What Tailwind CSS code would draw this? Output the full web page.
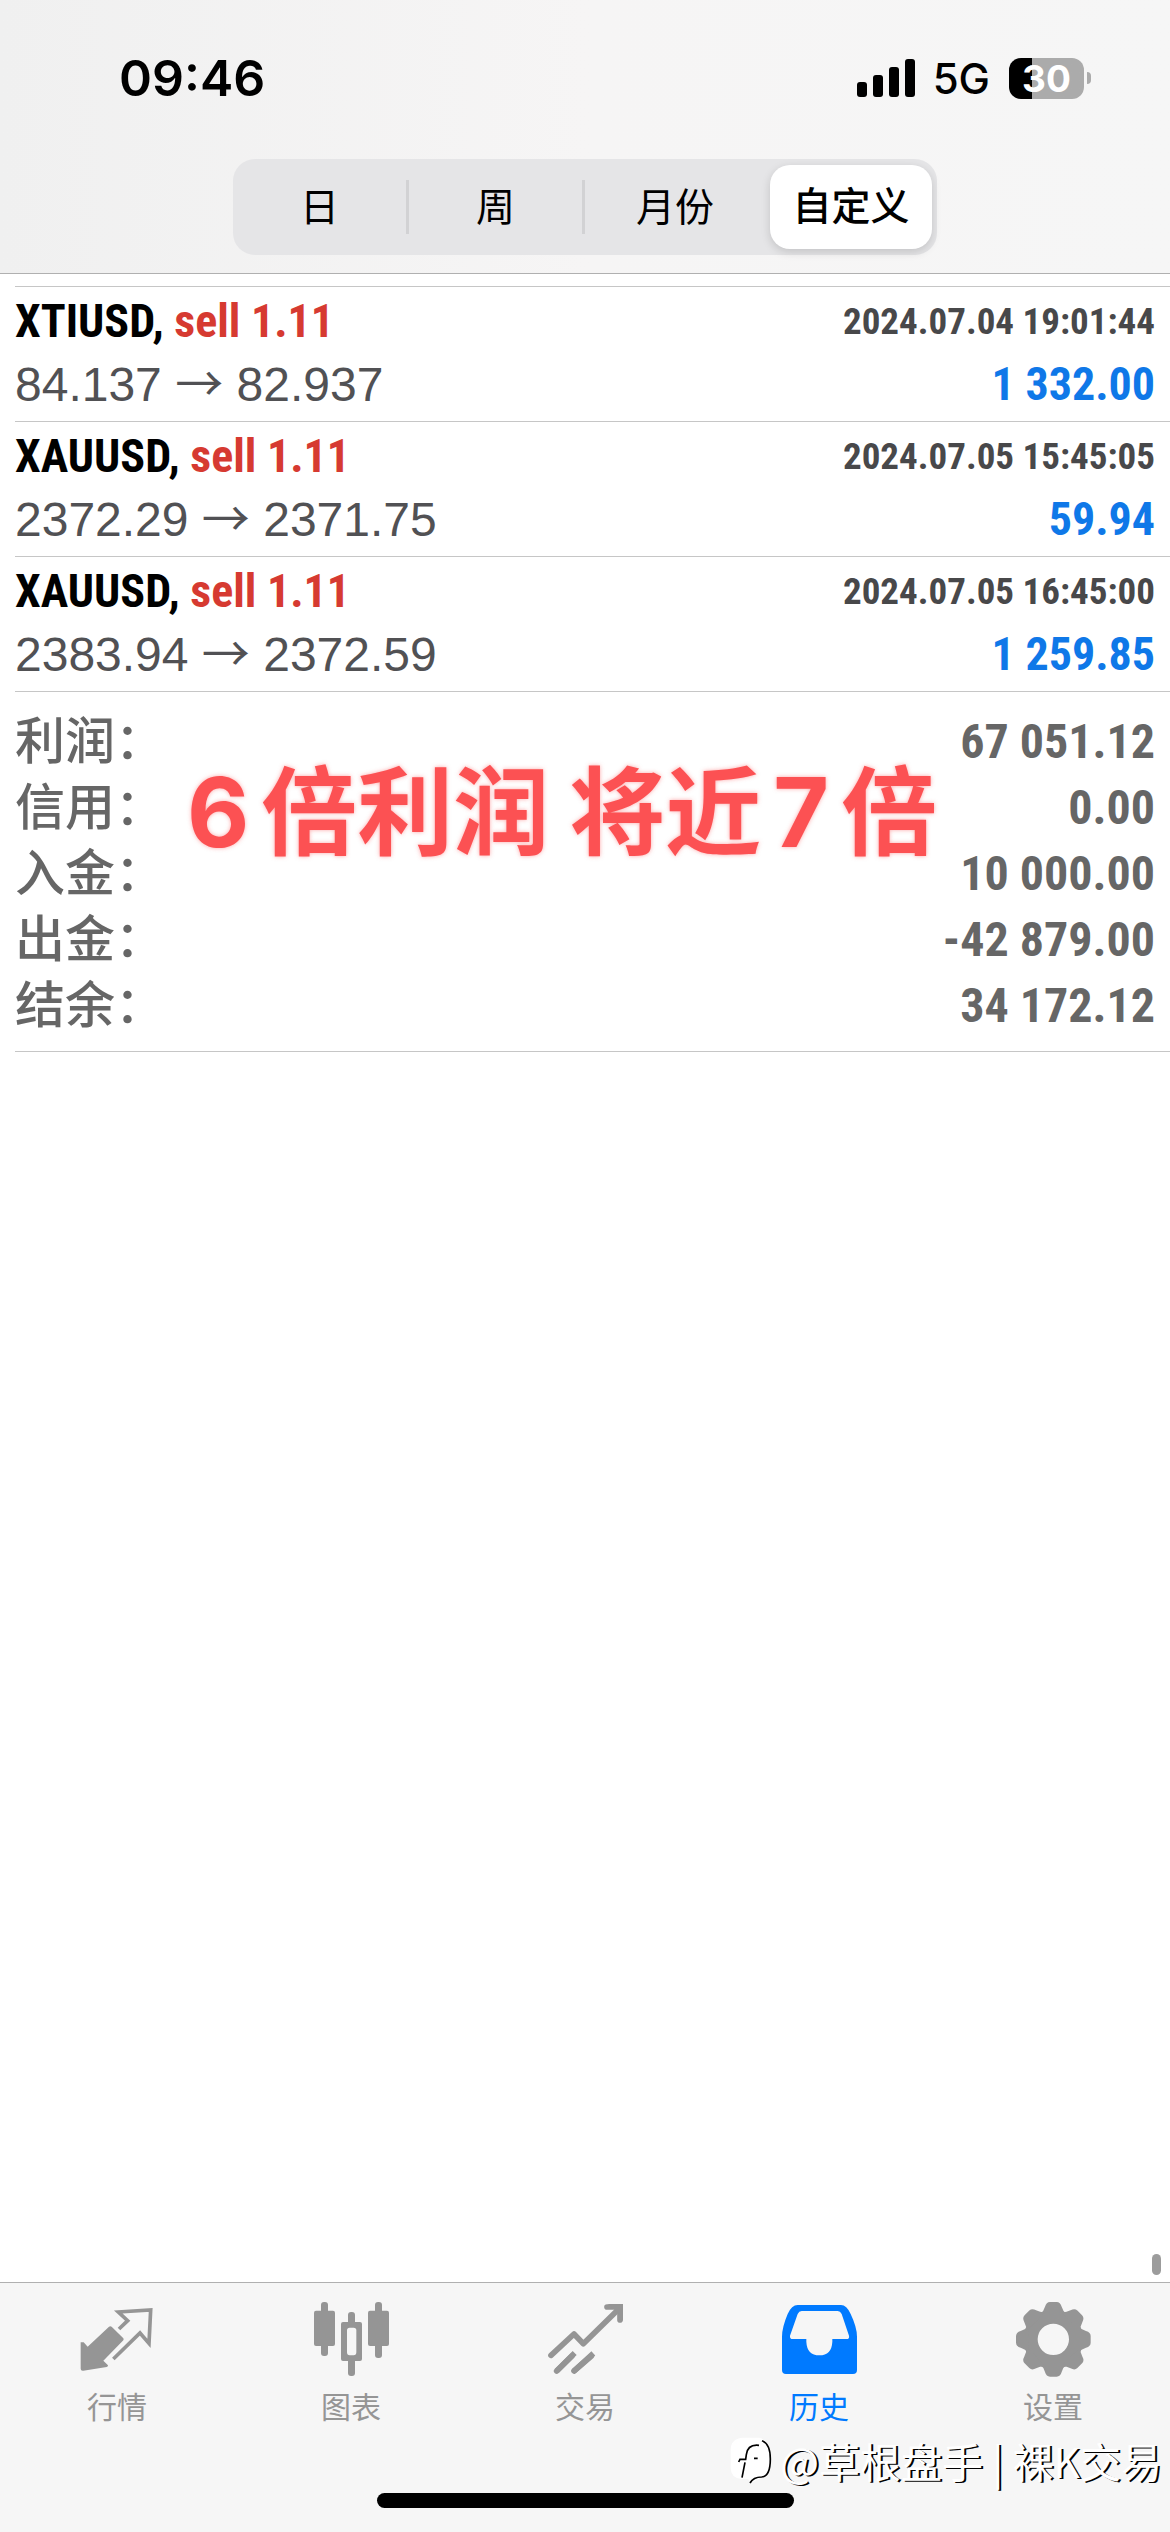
<!DOCTYPE html>
<html lang="zh-CN">
<head>
    <meta charset="UTF-8">
    <meta name="viewport" content="width=device-width, initial-scale=1.0">
    <title>历史</title>
    <script src="https://cdn.jsdelivr.net/npm/@tailwindcss/browser@4"></script>
</head>
<body class="bg-white font-['Liberation_Sans','Noto_Sans_CJK_SC',sans-serif]">
    <div class="relative flex min-h-screen flex-col">

        <!-- Status bar and period switch -->
        <header class="border-b border-[#b0b0b0] bg-linear-to-r from-[#f0f0f0] via-[#f6f5f5] to-[#f6f6f6] pb-[18px]">
            <div class="flex h-[159px] items-start justify-between pt-[46px] pl-[119px] pr-[79px] font-['Inter',sans-serif]">
                <span class="text-[50px] leading-[64px] font-semibold">09:46</span>
                <div class="flex h-[64px] items-center">
                    <svg class="h-[38px] w-[58px]" viewBox="0 0 58 38" aria-hidden="true">
                        <rect x="0" y="23" width="10" height="15" rx="3"/>
                        <rect x="16" y="16" width="10" height="22" rx="3"/>
                        <rect x="32" y="8" width="10" height="30" rx="3"/>
                        <rect x="48" y="0" width="10" height="38" rx="3"/>
                    </svg>
                    <span class="ml-[18px] text-[42px] font-medium">5G</span>
                    <div class="ml-[19px] flex h-[41px] w-[75px] items-center justify-center rounded-[12px] bg-linear-to-r from-black from-[31%] to-[#ababab] to-[31%] text-[37px] leading-none font-bold text-white">30</div>
                    <div class="ml-[3px] h-[12px] w-[4px] rounded-r-full bg-[#ababab]"></div>
                </div>
            </div>
            <div class="mx-auto grid h-[96px] w-[704px] grid-cols-4 items-center rounded-[22px] bg-[#e5e5e7] text-[39px]">
                <button class="h-[54px] border-r-3 border-[#d2d2d4] leading-[56px]">日</button>
                <button class="h-[54px] border-r-3 border-[#d2d2d4] leading-[56px]">周</button>
                <button class="h-[54px] pl-1 leading-[56px]">月份</button>
                <button class="mr-[5px] ml-[9px] h-[84px] rounded-[20px] bg-white leading-[56px] font-medium shadow-[0_3px_10px_rgba(0,0,0,0.15)]">自定义</button>
            </div>
        </header>

        <main class="flex-1 pt-[12px]">
            <!-- Closed deals -->
            <ul class="ml-[15px] border-t border-[#c6c6c6]">
                <li class="border-b border-[#c6c6c6] pt-[3px] pr-[15px] pb-[5px]">
                    <div class="flex items-center justify-between font-['Roboto_Condensed','Liberation_Sans_Narrow',sans-serif] leading-[63px] font-bold">
                        <h2 class="text-[46px]">XTIUSD, <span class="text-[#d63a31]">sell 1.11</span></h2>
                        <time class="text-[37px] text-[#48484a]">2024.07.04 19:01:44</time>
                    </div>
                    <div class="flex items-center justify-between text-[48px] leading-[63px]">
                        <span class="text-[#515154]">84.137 <span class="font-['Noto_Sans_CJK_SC',sans-serif] leading-none">→</span> 82.937</span>
                        <span class="font-['Roboto_Condensed','Liberation_Sans_Narrow',sans-serif] text-[46px] font-bold text-[#0f78e8]">1 332.00</span>
                    </div>
                </li>
                <li class="border-b border-[#c6c6c6] pt-[3px] pr-[15px] pb-[5px]">
                    <div class="flex items-center justify-between font-['Roboto_Condensed','Liberation_Sans_Narrow',sans-serif] leading-[63px] font-bold">
                        <h2 class="text-[46px]">XAUUSD, <span class="text-[#d63a31]">sell 1.11</span></h2>
                        <time class="text-[37px] text-[#48484a]">2024.07.05 15:45:05</time>
                    </div>
                    <div class="flex items-center justify-between text-[48px] leading-[63px]">
                        <span class="text-[#515154]">2372.29 <span class="font-['Noto_Sans_CJK_SC',sans-serif] leading-none">→</span> 2371.75</span>
                        <span class="font-['Roboto_Condensed','Liberation_Sans_Narrow',sans-serif] text-[46px] font-bold text-[#0f78e8]">59.94</span>
                    </div>
                </li>
                <li class="border-b border-[#c6c6c6] pt-[3px] pr-[15px] pb-[5px]">
                    <div class="flex items-center justify-between font-['Roboto_Condensed','Liberation_Sans_Narrow',sans-serif] leading-[63px] font-bold">
                        <h2 class="text-[46px]">XAUUSD, <span class="text-[#d63a31]">sell 1.11</span></h2>
                        <time class="text-[37px] text-[#48484a]">2024.07.05 16:45:00</time>
                    </div>
                    <div class="flex items-center justify-between text-[48px] leading-[63px]">
                        <span class="text-[#515154]">2383.94 <span class="font-['Noto_Sans_CJK_SC',sans-serif] leading-none">→</span> 2372.59</span>
                        <span class="font-['Roboto_Condensed','Liberation_Sans_Narrow',sans-serif] text-[46px] font-bold text-[#0f78e8]">1 259.85</span>
                    </div>
                </li>
            </ul>

            <!-- Account totals -->
            <section class="relative ml-[15px] border-b border-[#c6c6c6] pt-[17px] pr-[15px] pb-[12px] leading-[66px] text-[#666666]">
                <dl class="grid grid-cols-[auto_1fr] text-[50px]">
                    <dt class="h-[66px] font-medium">利润：</dt>
                    <dd class="h-[66px] text-right font-['Roboto_Condensed','Liberation_Sans_Narrow',sans-serif] text-[48px] font-bold">67 051.12</dd>
                    <dt class="h-[66px] font-medium">信用：</dt>
                    <dd class="h-[66px] text-right font-['Roboto_Condensed','Liberation_Sans_Narrow',sans-serif] text-[48px] font-bold">0.00</dd>
                    <dt class="h-[66px] font-medium">入金：</dt>
                    <dd class="h-[66px] text-right font-['Roboto_Condensed','Liberation_Sans_Narrow',sans-serif] text-[48px] font-bold">10 000.00</dd>
                    <dt class="h-[66px] font-medium">出金：</dt>
                    <dd class="h-[66px] text-right font-['Roboto_Condensed','Liberation_Sans_Narrow',sans-serif] text-[48px] font-bold">-42 879.00</dd>
                    <dt class="h-[66px] font-medium">结余：</dt>
                    <dd class="h-[66px] text-right font-['Roboto_Condensed','Liberation_Sans_Narrow',sans-serif] text-[48px] font-bold">34 172.12</dd>
                </dl>
                <p class="absolute top-[70px] left-[172px] flex gap-3 font-['Inter','Noto_Sans_CJK_SC',sans-serif] text-[96px] leading-[100px] font-bold whitespace-nowrap text-[#fc5153] [text-shadow:0_0_4px_rgba(252,81,83,0.5)]">
                    <span>6</span>
                    <span>倍利润</span>
                    <span class="ml-2">将近</span>
                    <span>7</span>
                    <span>倍</span>
                </p>
            </section>
        </main>

        <!-- Tab bar -->
        <footer class="relative border-t border-[#b0b0b0] bg-[#f6f6f6] pt-[19px] pb-6">
            <div class="absolute right-[9px] bottom-full mb-[8px] h-[21px] w-[9px] rounded-full bg-[#9c9c9c]"></div>
            <nav class="grid grid-cols-5 text-[30px] leading-[44px] text-[#959595]">
                <a href="#" class="flex flex-col items-center gap-[9px]">
                    <svg class="size-[75px]" viewBox="238 186 225 225" aria-hidden="true">
                        <path fill="currentColor" d="M240 307h9l12 13 64-60q4-3 8 0l35 35q2 3 0 6l-60 61 14 14q1 4-4 5l-70 11q-8 1-8-6z"/>
                        <path fill="none" stroke="currentColor" stroke-width="11" d="M355 267l26-25-28-26 97-6-5 100-27-31-80 78"/>
                    </svg>
                    行情
                </a>
                <a href="#" class="flex flex-col items-center gap-[9px]">
                    <svg class="size-[75px]" viewBox="939 186 225 225" aria-hidden="true">
                        <g fill="currentColor">
                            <rect x="960" y="186" width="21" height="162" rx="9"/>
                            <rect x="939" y="212" width="63" height="106" rx="6"/>
                            <rect x="1122" y="186" width="21" height="168" rx="9"/>
                            <rect x="1101" y="212" width="63" height="106" rx="6"/>
                            <rect x="1041" y="216" width="21" height="40" rx="9"/>
                            <rect x="1041" y="350" width="21" height="58" rx="9"/>
                            <path fill-rule="evenodd" d="M1026 246h51q6 0 6 6v105q0 6-6 6h-51q-6 0-6-6V252q0-6 6-6zM1046 263q-8 0-8 8v66q0 9 8 9h12q8 0 8-9v-66q0-8-8-8z"/>
                        </g>
                    </svg>
                    图表
                </a>
                <a href="#" class="flex flex-col items-center gap-[9px]">
                    <svg class="size-[75px]" viewBox="441 186 225 225" aria-hidden="true">
                        <g fill="none" stroke="currentColor" stroke-width="17">
                            <path stroke-linecap="round" stroke-linejoin="round" d="M450 346l69-64 28 29 104-102"/>
                            <path stroke-linecap="round" d="M618 201h39v39"/>
                            <path fill="currentColor" stroke="none" d="M620 192h46v52l-14-24-12-12z"/>
                            <path stroke-linecap="round" d="M467 393l46-45M519 393l52-45"/>
                            <path d="M467 393l54-54M519 393l58-53"/>
                        </g>
                    </svg>
                    交易
                </a>
                <a href="#" class="flex flex-col items-center gap-[9px] text-[#007aff]" aria-current="page">
                    <svg class="size-[75px]" viewBox="243 186 225 225" aria-hidden="true">
                        <path fill="currentColor" fill-rule="evenodd" d="M243 290Q243 262 260 222Q272 195 290 195H420Q437 195 449 222Q468 262 468 290V390Q468 402 456 402H255Q243 402 243 390ZM290 222Q294 213 302 213H410Q418 213 422 222L444 287Q446 297 437 297H394V305Q392 346 355 346Q318 346 316 305V297H275Q266 297 267 287Z"/>
                    </svg>
                    历史
                </a>
                <a href="#" class="flex flex-col items-center gap-[9px]">
                    <svg class="size-[75px]" viewBox="-112 -112 225 225" aria-hidden="true">
                        <circle r="68" fill="none" stroke="currentColor" stroke-width="42"/>
                        <g fill="currentColor">
                            <path id="tooth" d="M-40-74Q-29-84-25-98Q-21-112-10-112H10Q21-112 25-98Q29-84 40-74Z"/>
                            <use href="#tooth" transform="rotate(45)"/>
                            <use href="#tooth" transform="rotate(90)"/>
                            <use href="#tooth" transform="rotate(135)"/>
                            <use href="#tooth" transform="rotate(180)"/>
                            <use href="#tooth" transform="rotate(225)"/>
                            <use href="#tooth" transform="rotate(270)"/>
                            <use href="#tooth" transform="rotate(315)"/>
                        </g>
                    </svg>
                    设置
                </a>
            </nav>
            <div class="mx-auto mt-[63px] h-[15px] w-[417px] rounded-full bg-black"></div>

            <!-- Author watermark -->
            <div class="absolute right-[8px] bottom-[42px] flex items-center gap-[8px] font-['Noto_Sans_CJK_SC',sans-serif] text-[41px] leading-[60px] whitespace-nowrap text-white">
                <svg class="h-[48px] w-[42px]" viewBox="88 615 126 144" aria-hidden="true">
                    <path fill="#fff" d="M125 620h50q35 8 35 60 0 55-28 60l-32 16-8-12h-20q-32-4-32-34v-54q0-32 35-36z"/>
                    <path fill="none" stroke="#000" stroke-width="5" d="M184 629q25 10 25 55 0 52-26 54-25 0-35 18M175 643q-34-4-38 28l-2 14h-17l-4 8M133 694l-9 46M160 682h11"/>
                </svg>
                <span class="[text-shadow:2px_1px_0_#000]">@草根盘手 | 裸K交易</span>
            </div>
        </footer>
    </div>
</body>
</html>
